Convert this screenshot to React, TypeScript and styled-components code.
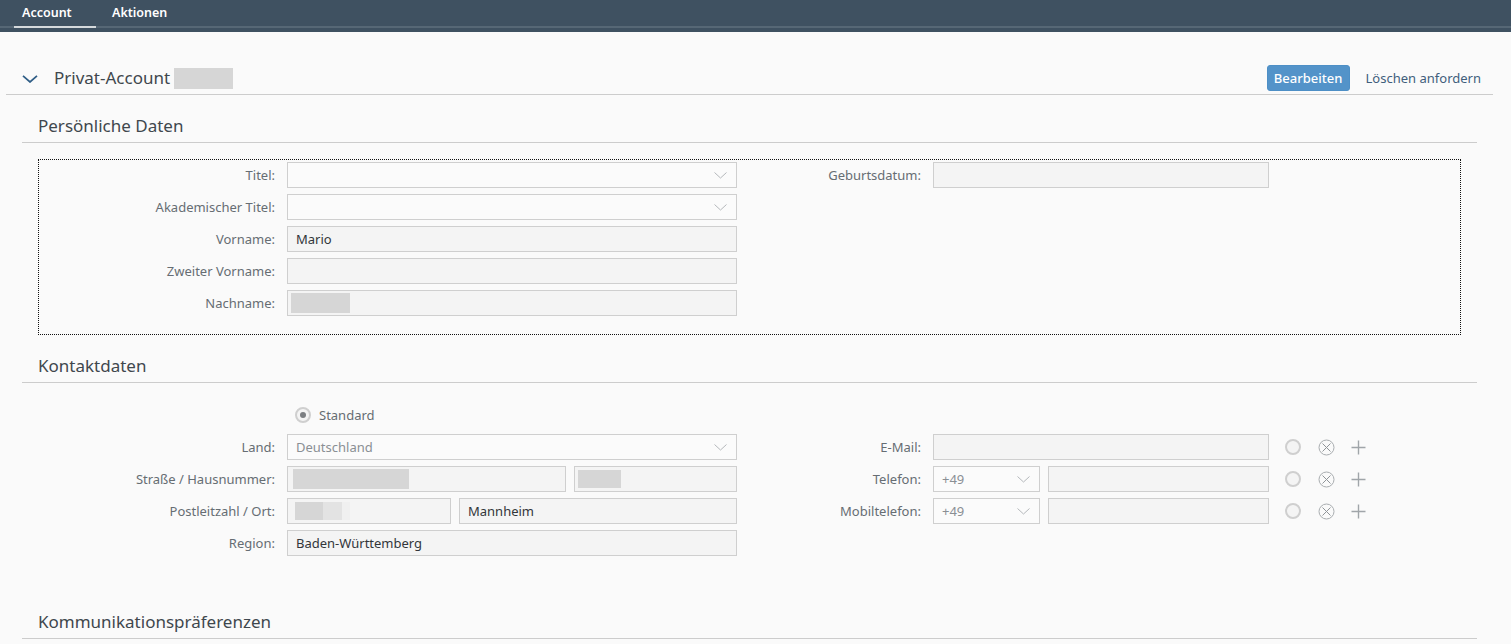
import React from "react";
import styled, { createGlobalStyle } from "styled-components";

const Global = createGlobalStyle`
  html, body { margin: 0; padding: 0; background: #fafafa; }
  body { font-family: "Noto Sans", "Liberation Sans", sans-serif; color: #32363a; overflow: hidden; }
  * { box-sizing: border-box; }
`;

const Page = styled.div`
  width: 1511px;
  height: 644px;
  overflow: hidden;
  display: flex;
  flex-direction: column;
`;
const TopBar = styled.nav`
  height: 32px;
  background: #3f5161;
  padding: 0 0 4px;
  flex: none;
`;
const TabStrip = styled.div`
  height: 28px;
  display: flex;
  padding-left: 14px;
  border-bottom: 2px solid #566775;
`;
const Tab = styled.div<{ $active?: boolean }>`
  width: ${p => (p.$active ? "82px" : "auto")};
  margin-left: ${p => (p.$active ? "0" : "16px")};
  height: 28px;
  padding: 4px 0 0 ${p => (p.$active ? "8px" : "0")};
  font-size: 12.5px;
  line-height: 17px;
  font-weight: 600;
  color: #fff;
  border-bottom: 2px solid ${p => (p.$active ? "#d5d9dc" : "transparent")};
`;
const AccountHeader = styled.header`
  margin: 33px 18px 0 6px;
  height: 30px;
  padding: 0 12px 3px 16px;
  display: flex;
  align-items: center;
  border-bottom: 1px solid #cccccc;
`;
const Chevron = styled.svg`
  width: 16px;
  height: 8px;
  margin-right: 16px;
  margin-top: 1px;
`;
const AccountTitle = styled.h1`
  margin: 0;
  font-size: 17px;
  font-weight: 400;
  color: #3f474d;
  line-height: 22px;
`;
const HeaderSpacer = styled.div`
  flex: 1;
`;
const PrimaryButton = styled.button`
  width: 83px;
  height: 26px;
  margin-right: 16px;
  border: 1px solid #4d8fc6;
  border-radius: 3px;
  background: #5393c9;
  color: #fff;
  font: 500 13px "Noto Sans", sans-serif;
  padding: 0;
`;
const LinkText = styled.span`
  font-size: 13px;
  color: #3f5e7c;
`;
const Section = styled.section<{ $top: number }>`
  margin: ${p => p.$top}px 34px 0 22px;
`;
const SectionTitle = styled.h2`
  margin: 0;
  height: 32px;
  padding: 4px 0 0 16px;
  font-size: 17px;
  line-height: 22px;
  font-weight: 400;
  color: #3f474d;
  border-bottom: 1px solid #cccccc;
`;
const FormGrid = styled.div<{ $focused?: boolean; $top: number }>`
  margin: ${p => p.$top}px 16px 0;
  height: ${p => (p.$focused ? "176px" : "auto")};
  padding: ${p => (p.$focused ? "2px 0 0" : "0")};
  border: 1px ${p => (p.$focused ? "dotted #111" : "solid transparent")};
  display: flex;
  align-items: flex-start;
`;
const LeftColumn = styled.div`
  width: 698px;
  display: flex;
  flex-direction: column;
  gap: 6px;
`;
const RightColumn = styled.div`
  display: flex;
  flex-direction: column;
  gap: 6px;
`;
const Row = styled.div`
  display: flex;
  align-items: center;
  height: 26px;
`;
const Label = styled.label<{ $w: number }>`
  width: ${p => p.$w}px;
  flex: none;
  text-align: right;
  padding-right: 12px;
  font-size: 13px;
  color: #666d73;
  white-space: nowrap;
`;
const Field = styled.div<{ $w: number; $mode?: "select" | "readonly"; $gap?: boolean }>`
  width: ${p => p.$w}px;
  height: 26px;
  flex: none;
  margin-left: ${p => (p.$gap ? "8px" : "0")};
  border: 1px solid #cfcfcf;
  background: ${p => (p.$mode === "select" ? "#fbfbfb" : "#f4f4f4")};
  display: flex;
  align-items: center;
  padding: 0 8px;
  font-size: 13px;
  color: ${p => (p.$mode === "select" ? "#8a8f94" : "#32363a")};
  position: relative;
`;
const FieldValue = styled.span`
  flex: 1;
`;
const FieldChevron = styled.svg`
  width: 13px;
  height: 7px;
  margin-right: 1px;
  flex: none;
`;
const Redacted = styled.span<{ $left: number; $w: number; $h: number; $c?: string }>`
  position: absolute;
  left: ${p => p.$left}px;
  top: ${p => (24 - p.$h) / 2}px;
  width: ${p => p.$w}px;
  height: ${p => p.$h}px;
  background: ${p => p.$c || "#d6d6d6"};
`;
const NameBlur = styled.span`
  width: 59px;
  height: 21px;
  margin: 1px 0 0 4px;
  background: #d6d6d6;
`;
const StandardRow = styled.div`
  height: 26px;
  display: flex;
  align-items: center;
  padding-left: 256px;
  font-size: 13px;
  color: #666d73;
`;
const RadioOuter = styled.span`
  width: 16px;
  height: 16px;
  border-radius: 50%;
  border: 2px solid #cfcfcf;
  background: #f4f4f4;
  display: flex;
  align-items: center;
  justify-content: center;
  margin-right: 8px;
`;
const RadioDot = styled.span`
  width: 6px;
  height: 6px;
  border-radius: 50%;
  background: #7c7f82;
`;
const Actions = styled.div`
  display: flex;
  align-items: center;
  margin-left: 16px;
  gap: 16px;
`;
const RadioEmpty = styled.span`
  width: 16px;
  height: 16px;
  margin-right: 1px;
  border-radius: 50%;
  border: 2px solid #cfcfcf;
  background: #f4f4f4;
`;
const ActionIcon = styled.svg<{ $w: number }>`
  width: ${p => p.$w}px;
  height: ${p => p.$w}px;
  display: block;
`;

const Down = () => (
  <FieldChevron viewBox="0 0 13 7">
    <path d="M.5.5 6.5 6 12.5.5" fill="none" stroke="#b4b8bb" strokeWidth="1" />
  </FieldChevron>
);

const RowActions = () => (
  <Actions>
    <RadioEmpty />
    <ActionIcon $w={17} viewBox="0 0 17 17">
      <circle cx="8.5" cy="8.5" r="7.5" fill="none" stroke="#a9adb0" />
      <path d="M4.5 4.5l8 8M12.5 4.5l-8 8" stroke="#8f9498" fill="none" />
    </ActionIcon>
    <ActionIcon $w={15} viewBox="0 0 15 15">
      <path d="M7.5.5v14M.5 7.5h14" stroke="#a0a5a9" strokeWidth="1.4" fill="none" />
    </ActionIcon>
  </Actions>
);

export default function App() {
  return (
    <Page>
      <Global />
      <TopBar>
        <TabStrip>
          <Tab $active>Account</Tab>
          <Tab>Aktionen</Tab>
        </TabStrip>
      </TopBar>

      <AccountHeader>
        <Chevron viewBox="0 0 16 8">
          <path d="M1 .8 8 7l7-6.2" fill="none" stroke="#2f5d86" strokeWidth="1.7" />
        </Chevron>
        <AccountTitle>Privat-Account</AccountTitle>
        <NameBlur />
        <HeaderSpacer />
        <PrimaryButton>Bearbeiten</PrimaryButton>
        <LinkText>Löschen anfordern</LinkText>
      </AccountHeader>

      <Section $top={16}>
        <SectionTitle>Persönliche Daten</SectionTitle>
        <FormGrid $focused $top={16}>
          <LeftColumn>
            <Row>
              <Label $w={248}>Titel:</Label>
              <Field $w={450} $mode="select"><FieldValue /><Down /></Field>
            </Row>
            <Row>
              <Label $w={248}>Akademischer Titel:</Label>
              <Field $w={450} $mode="select"><FieldValue /><Down /></Field>
            </Row>
            <Row>
              <Label $w={248}>Vorname:</Label>
              <Field $w={450}>Mario</Field>
            </Row>
            <Row>
              <Label $w={248}>Zweiter Vorname:</Label>
              <Field $w={450} />
            </Row>
            <Row>
              <Label $w={248}>Nachname:</Label>
              <Field $w={450}><Redacted $left={3} $w={59} $h={20} /></Field>
            </Row>
          </LeftColumn>
          <RightColumn>
            <Row>
              <Label $w={196}>Geburtsdatum:</Label>
              <Field $w={336} />
            </Row>
          </RightColumn>
        </FormGrid>
      </Section>

      <Section $top={16}>
        <SectionTitle>Kontaktdaten</SectionTitle>
        <FormGrid $top={18}>
          <LeftColumn>
            <StandardRow>
              <RadioOuter><RadioDot /></RadioOuter>
              Standard
            </StandardRow>
            <Row>
              <Label $w={248}>Land:</Label>
              <Field $w={450} $mode="select"><FieldValue>Deutschland</FieldValue><Down /></Field>
            </Row>
            <Row>
              <Label $w={248}>Straße / Hausnummer:</Label>
              <Field $w={279}><Redacted $left={5} $w={116} $h={20} /></Field>
              <Field $w={163} $gap><Redacted $left={3} $w={43} $h={18} /></Field>
            </Row>
            <Row>
              <Label $w={248}>Postleitzahl / Ort:</Label>
              <Field $w={164}>
                <Redacted $left={7} $w={28} $h={18} />
                <Redacted $left={35} $w={19} $h={18} $c="#e3e3e3" />
                <Redacted $left={54} $w={8} $h={18} $c="#f0f0f0" />
              </Field>
              <Field $w={278} $gap>Mannheim</Field>
            </Row>
            <Row>
              <Label $w={248}>Region:</Label>
              <Field $w={450}>Baden-Württemberg</Field>
            </Row>
          </LeftColumn>
          <RightColumn>
            <Row />
            <Row>
              <Label $w={196}>E-Mail:</Label>
              <Field $w={336} />
              <RowActions />
            </Row>
            <Row>
              <Label $w={196}>Telefon:</Label>
              <Field $w={107} $mode="select"><FieldValue>+49</FieldValue><Down /></Field>
              <Field $w={221} $gap />
              <RowActions />
            </Row>
            <Row>
              <Label $w={196}>Mobiltelefon:</Label>
              <Field $w={107} $mode="select"><FieldValue>+49</FieldValue><Down /></Field>
              <Field $w={221} $gap />
              <RowActions />
            </Row>
          </RightColumn>
        </FormGrid>
      </Section>

      <Section $top={50}>
        <SectionTitle>Kommunikationspräferenzen</SectionTitle>
      </Section>
    </Page>
  );
}
